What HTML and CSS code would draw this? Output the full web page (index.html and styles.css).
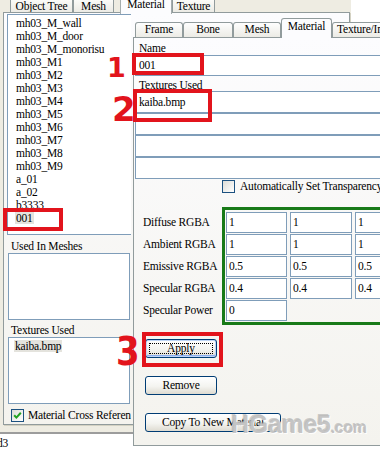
FILE: index.html
```html
<!DOCTYPE html>
<html>
<head>
<meta charset="utf-8">
<link rel="stylesheet" href="styles.css">
</head>
<body>
<div class="screen">
  <div class="outer">
    <div class="otabs">
      <div class="otab t-obj">Object Tree</div>
      <div class="otab t-mesh">Mesh</div>
      <div class="otab t-mat sel">Material</div>
      <div class="otab t-tex">Texture</div>
    </div>
    <div class="opage">
      <div class="leftcol">
        <ul class="objlist">
          <li>mh03_M_wall</li>
          <li>mh03_M_door</li>
          <li>mh03_M_monorisu</li>
          <li>mh03_M1</li>
          <li>mh03_M2</li>
          <li>mh03_M3</li>
          <li>mh03_M4</li>
          <li>mh03_M5</li>
          <li>mh03_M6</li>
          <li>mh03_M7</li>
          <li>mh03_M8</li>
          <li>mh03_M9</li>
          <li>a_01</li>
          <li>a_02</li>
          <li>b3333</li>
          <li><span class="hl">001</span></li>
        </ul>
        <div class="llabel l-mesh">Used In Meshes</div>
        <div class="lbox"></div>
        <div class="llabel l-tex">Textures Used</div>
        <div class="lbox"><span class="hl">kaiba.bmp</span></div>
        <div class="lcheck">
          <span class="cb"><svg width="11" height="11" viewBox="0 0 11 11"><path d="M2.2 5.2 L4.4 7.6 L8.8 2.8" fill="none" stroke="#21a121" stroke-width="2"/></svg></span>
          <span>Material Cross Reference</span>
        </div>
      </div>
    </div>
  </div>
  <div class="status"><span class="stext">d3</span></div>

  <div class="dialog">
    <div class="itabs">
      <div class="itab w-frame">Frame</div>
      <div class="itab w-bone">Bone</div>
      <div class="itab w-mesh">Mesh</div>
      <div class="itab w-mat sel">Material</div>
      <div class="itab w-tex">Texture/Image</div>
    </div>
    <div class="ipage">
      <div class="ilabel">Name</div>
      <div class="field wide">001</div>
      <div class="ilabel l2">Textures Used</div>
      <div class="texlist">
        <div class="field wide tall">kaiba.bmp</div>
        <div class="field wide tall"></div>
        <div class="field wide tall"></div>
        <div class="field wide tall"></div>
      </div>
      <div class="autochk"><span class="cb cb-off"></span><span>Automatically Set Transparency</span></div>
      <div class="matgrid">
        <div class="mlabels">
          <div>Diffuse RGBA</div>
          <div>Ambient RGBA</div>
          <div>Emissive RGBA</div>
          <div>Specular RGBA</div>
          <div>Specular Power</div>
        </div>
        <div class="gbox">
          <div class="ggrid">
            <div class="f">1</div><div class="f">1</div><div class="f">1</div>
            <div class="f">1</div><div class="f">1</div><div class="f">1</div>
            <div class="f">0.5</div><div class="f">0.5</div><div class="f">0.5</div>
            <div class="f">0.4</div><div class="f">0.4</div><div class="f">0.4</div>
            <div class="f">0</div>
          </div>
        </div>
      </div>
      <button class="btn apply">Apply</button>
      <button class="btn remove">Remove</button>
      <button class="btn copy">Copy To New Material</button>
    </div>
  </div>

  <div class="wm">HGame5<span class="com">.com</span></div>

  <div class="rbox rb0"></div>
  <div class="rbox rb1"></div>
  <div class="rbox rb2"></div>
  <div class="rbox rb3"></div>
  <div class="num n1">1</div>
  <div class="num n2">2</div>
  <div class="num n3">3</div>
</div>
</body>
</html>
```

FILE: styles.css
```css
* { box-sizing: border-box; margin: 0; padding: 0; }
html, body { width: 380px; height: 450px; overflow: hidden; background: #fff; }
body {
  font-family: "Liberation Serif", "Times New Roman", serif;
  font-size: 11.5px;
  letter-spacing: -0.2px;
  line-height: 14px;
  color: #000;
}
.screen { position: relative; width: 380px; height: 450px; overflow: hidden; background: #fff; }

/* ---------- outer window ---------- */
.outer {
  width: 351px;
  height: 432px;
  background: #eeece2;
  display: flex;
  flex-direction: column;
}
.otabs {
  height: 12px;
  display: flex;
  align-items: stretch;
  padding-left: 10px;
  position: relative;
  z-index: 2;
}
.otab {
  border: 1px solid #919b9c;
  border-top: none;
  border-bottom: none;
  background: linear-gradient(#fbfbf8, #ecebe5);
  text-align: center;
  line-height: 12px;
  white-space: nowrap;
  overflow: hidden;
}
.t-obj { width: 63px; }
.t-mesh { width: 41px; }
.t-mat { width: 52px; margin-left: 6px; }
.t-tex { width: 43px; }
.otab.sel {
  height: 14px;
  line-height: 8px;
  background: #fcfcfe;
  border-color: #a5adae;
}

.opage {
  margin-left: 3px;
  width: 347px;
  height: 413px;
  border: 1px solid #919b9c;
  background: linear-gradient(#fcfcfe, #f4f3ee);
  box-shadow: 1px 1px 0 #d3d1c2;
}
.leftcol {
  width: 127px;
  height: 100%;
  overflow: hidden;
  padding-left: 3px;
}
.objlist {
  list-style: none;
  margin-top: 1px;
  width: 140px;
  height: 221px;
  border: 1px solid #7f9db9;
  background: #fff;
  padding: 2px 0 0 8px;
  line-height: 13px;
  white-space: nowrap;
}
.hl { background: #e4e3dd; padding: 0 1px; margin-left: -1px; }

.llabel { padding-left: 4px; line-height: 14px; white-space: nowrap; }
.l-mesh { height: 18px; padding-top: 4px; }
.l-tex { height: 17px; padding-top: 3px; }
.lbox {
  margin-left: 1px;
  width: 122px;
  height: 67px;
  border: 1px solid #7f9db9;
  background: #fff;
  padding: 2px 0 0 6px;
  line-height: 12px;
}
.lcheck {
  margin-top: 5px;
  height: 13px;
  display: flex;
  align-items: center;
  gap: 4px;
  padding-left: 4px;
  white-space: nowrap;
  line-height: 13px;
}
.cb {
  flex: none;
  width: 13px;
  height: 13px;
  border: 1px solid #1c5180;
  background: linear-gradient(135deg, #dcdcd7, #ffffff);
  display: flex;
  align-items: center;
  justify-content: center;
}

.status {
  height: 18px;
  border-top: 2px solid #9c9c9c;
  background: #fff;
  line-height: 14px;
  padding-top: 2px;
}
.stext { margin-left: -3px; }

/* ---------- inner dialog (window on top) ---------- */
.dialog {
  position: absolute;
  left: 133px;
  top: 17px;
  width: 262px;
  height: 429px;
}
.itabs {
  height: 20px;
  display: flex;
  align-items: flex-end;
  padding-left: 2px;
  position: relative;
  z-index: 2;
}
.itab {
  flex: none;
  height: 15px;
  border: 1px solid #919b9c;
  border-bottom: none;
  border-radius: 3px 3px 0 0;
  background: linear-gradient(#fefefe, #ecebe5);
  text-align: center;
  line-height: 13px;
  white-space: nowrap;
  overflow: hidden;
}
.w-frame { width: 48px; }
.w-bone { width: 50px; }
.w-mesh { width: 48px; }
.w-mat { width: 51px; }
.w-tex { width: 62px; text-align: left; padding-left: 4px; }
.itab.sel {
  height: 20px;
  margin-bottom: -1px;
  line-height: 15px;
  background: #fcfcfe;
}
.ipage {
  height: 409px;
  border: 1px solid #919b9c;
  border-right: none;
  background: linear-gradient(#fcfcfe, #f4f3ee);
  padding-left: 1px;
}
.ilabel {
  height: 17px;
  padding-top: 3px;
  padding-left: 4px;
  line-height: 14px;
}
.ilabel.l2 { height: 15px; line-height: 12px; }
.field {
  height: 21px;
  border: 1px solid #7f9db9;
  background: #fff;
  padding-left: 3px;
  line-height: 19px;
}
.field.wide { width: 300px; }
.field.tall { height: 22px; line-height: 20px; }

.autochk {
  margin-top: 1px;
  height: 13px;
  display: flex;
  align-items: center;
  gap: 5px;
  padding-left: 87px;
  white-space: nowrap;
  line-height: 13px;
}
.cb-off { border-color: #1c5180; }

.matgrid { display: flex; margin-top: 14px; }
.mlabels { flex: none; width: 87px; padding-top: 5px; padding-left: 8px; white-space: nowrap; }
.mlabels div { height: 22px; line-height: 20px; }
.gbox {
  flex: none;
  width: 210px;
  border: 3px solid #187a18;
  padding: 2px 0 1px 1px;
}
.ggrid {
  display: grid;
  grid-template-columns: 61px 62px 61px;
  column-gap: 3px;
  row-gap: 1px;
}
.ggrid .f {
  height: 21px;
  border: 1px solid #7f9db9;
  background: #fff;
  padding-left: 2px;
  line-height: 19px;
}

.btn {
  display: block;
  position: relative;
  margin-left: 10px;
  height: 19px;
  border: 1px solid #003c74;
  border-radius: 3px;
  background: linear-gradient(#ffffff, #f4f4f0 55%, #dedbd1);
  font: inherit;
  letter-spacing: inherit;
  color: #000;
  text-align: center;
  line-height: 17px;
  padding: 0;
}
.apply {
  width: 72px;
  margin-top: 14px;
  box-shadow: inset 0 0 0 1px #bcd4f6, inset 0 -1px 0 1px #89adf0;
}
.apply::after {
  content: "";
  position: absolute;
  left: 3px; right: 3px; top: 3px; bottom: 3px;
  border: 1px dotted #000;
}
.remove { width: 72px; margin-top: 18px; }
.copy { width: 136px; margin-top: 18px; }

/* ---------- watermark & annotations ---------- */
.wm {
  position: absolute;
  left: 231px;
  top: 412px;
  font: bold 25px/1 "Liberation Sans", Arial, sans-serif;
  color: rgba(188, 188, 188, 0.85);
  text-shadow: 1px 1px 0 rgba(255,255,255,0.9), -1px -1px 0 rgba(150,150,150,0.45);
  white-space: nowrap;
  letter-spacing: -0.3px;
}
.com { font-size: 16px; }

.rbox { position: absolute; border: 4px solid #e2141c; }
.rb0 { left: 3px; top: 208px; width: 60px; height: 23px; }
.rb1 { left: 132px; top: 53px; width: 72px; height: 22px; }
.rb2 { left: 133px; top: 89px; width: 79px; height: 33px; }
.rb3 { left: 142px; top: 332px; width: 81px; height: 35px; }

.num {
  position: absolute;
  color: #e2141c;
  font-family: "DejaVu Sans", sans-serif;
  font-weight: bold;
  letter-spacing: 0;
  line-height: 1;
}
.n1 { left: 107px; top: 54px; font-size: 27px; }
.n2 { left: 112px; top: 92px; font-size: 34px; }
.n3 { left: 116px; top: 332px; font-size: 34px; transform: scaleY(1.15); transform-origin: top left; }
```
